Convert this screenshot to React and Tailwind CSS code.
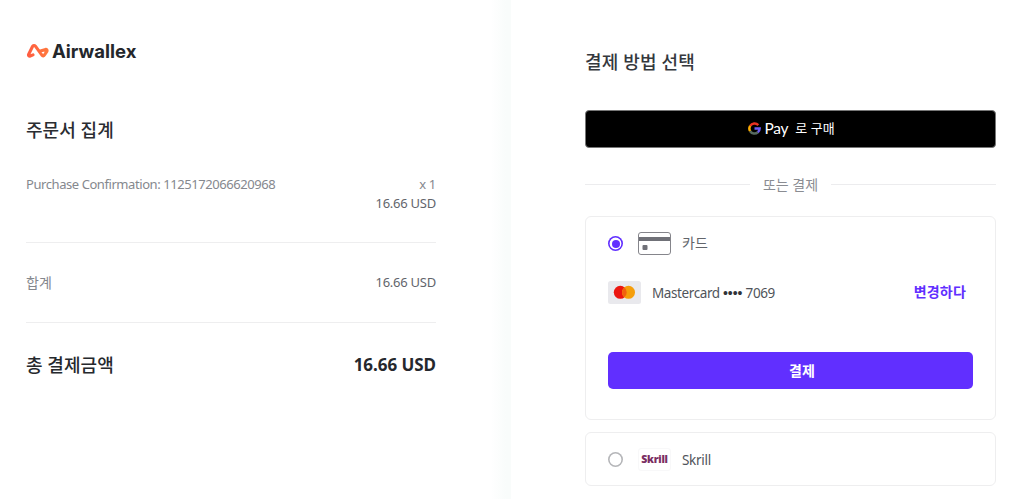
import React, { useState } from 'react';

const order = {
  item: 'Purchase Confirmation: 1125172066620968',
  quantity: 1,
  amount: '16.66 USD',
};

const AirwallexLogo = () => (
  <div className="flex h-5 items-center">
    <svg className="h-4 w-[23px] shrink-0" viewBox="0 0 23 16" fill="none">
      <defs>
        <linearGradient id="airwallex" x1="0" y1="0" x2="23" y2="0" gradientUnits="userSpaceOnUse">
          <stop stopColor="#ff5a41" />
          <stop offset="1" stopColor="#ff7a3d" />
        </linearGradient>
      </defs>
      <path
        d="M7 11.9 4.2 13C3.1 13.4 2.2 12.6 2.6 11.5L6.5 3.5C7.1 2.3 8.6 2.2 9.4 3.2L15.9 12.2C16.6 13.2 18 13 18.5 11.9L20.9 8.3C21.4 7.2 20.7 6.3 19.6 6.4L13.6 8.2"
        stroke="url(#airwallex)"
        strokeWidth="3.1"
        strokeLinecap="round"
        strokeLinejoin="round"
      />
    </svg>
    <span className="ml-[3px] font-['Inter',sans-serif] text-[18.5px] leading-5 font-bold tracking-[0px] text-[#24272b]">
      Airwallex
    </span>
  </div>
);

const GoogleIcon = () => (
  <svg className="h-[13px] w-[13px]" viewBox="0 0 24 24" fill="none" strokeWidth="4.6">
    <path d="M4 7A9.5 9.5 0 0 1 19 5.6" stroke="#ea3323" />
    <path d="M4 7A9.5 9.5 0 0 0 4 17" stroke="#f9ab00" />
    <path d="M4 17A9.5 9.5 0 0 0 18.2 19" stroke="#56695f" />
    <path d="M12 12H21.5A9.5 9.5 0 0 1 18.2 19" stroke="#6d5cf5" />
  </svg>
);

const CardIcon = () => (
  <svg className="h-[23px] w-[33px]" viewBox="0 0 33 23" fill="none">
    <rect x="0.5" y="0.5" width="32" height="22" rx="2.5" fill="#fff" stroke="#85858b" />
    <path d="M1 5h31v4H1z" fill="#707178" />
    <rect x="4.5" y="13" width="5" height="5" rx="1" fill="#707178" />
  </svg>
);

const MastercardIcon = () => (
  <svg className="h-[23px] w-[33px]" viewBox="0 0 33 23">
    <rect width="33" height="23" rx="2.5" fill="#e9e9ed" />
    <circle cx="12.3" cy="11.3" r="6.5" fill="#eb1610" />
    <circle cx="20.5" cy="11.3" r="6.5" fill="#f59e0b" />
    <path d="M16.4 6.3a6.5 6.5 0 0 1 0 10 6.5 6.5 0 0 1 0-10Z" fill="#f2610f" />
  </svg>
);

const Radio = ({ checked, onChange, label }) => (
  <button
    role="radio"
    aria-checked={checked}
    aria-label={label}
    onClick={onChange}
    className={`flex h-[15px] w-[15px] items-center justify-center rounded-full bg-white ring-inset ${
      checked ? 'ring-[1.6px] ring-[#612fff]' : 'ring-[1.6px] ring-[#b5b6b9]'
    }`}
  >
    {checked && <span className="h-[8px] w-[8px] rounded-full bg-[#612fff]" />}
  </button>
);

const OrderSummary = () => (
  <section className="flex h-full w-[511px] flex-col bg-linear-to-r from-white from-96% to-[#f9fcfb] to-99% pt-[41px] pr-[75px] pl-[26px]">
    <AirwallexLogo />
    <h2 className="mt-[57px] text-[18px] leading-6 font-medium tracking-[0.05px] text-[#2a2d32]">주문서 집계</h2>

    <div className="mt-[33px] flex h-[68px] justify-between border-b border-[#eeeeef] text-[13px] leading-[19px] text-[#85888e]">
      <span className="tracking-[-0.43px]">{order.item}</span>
      <div className="flex flex-col items-end">
        <span className="tracking-[-0.3px]">x {order.quantity}</span>
        <span className="tracking-[-0.25px] text-[#62656b]">{order.amount}</span>
      </div>
    </div>

    <div className="flex h-20 items-center justify-between border-b border-[#eeeeef] text-[13px] text-[#85888e]">
      <span className="text-[14px]">합계</span>
      <span className="pt-px tracking-[-0.25px] text-[#62656b]">{order.amount}</span>
    </div>

    <div className="flex h-[84px] items-center justify-between text-[#25282d]">
      <span className="text-[18px] font-medium tracking-[0.05px]">총 결제금액</span>
      <span className="text-[17px] font-bold tracking-[-0.05px]">{order.amount}</span>
    </div>
  </section>
);

const PaymentMethods = () => {
  const [method, setMethod] = useState('card');

  return (
    <section className="flex h-full w-[485px] flex-col pt-[50px] pl-[74px]">
      <h2 className="text-[18px] leading-6 font-medium tracking-[0.15px] text-[#35383d]">결제 방법 선택</h2>

      <button className="mt-9 flex h-[38px] shrink-0 items-center justify-center rounded-[4px] border border-[#777] bg-black pb-[2px] pl-[2px] text-white">
        <GoogleIcon />
        <span className="ml-[3px] font-['Lato',sans-serif] text-[15.5px] leading-5 tracking-[-0.2px]">Pay</span>
        <span className="ml-[7px] text-[13px] leading-5">로 구매</span>
      </button>

      <div className="mt-[26px] flex h-5 items-center gap-[13px] text-[14px] text-[#8a8c92]">
        <span className="h-px flex-1 bg-[#ececee]" />
        <span>또는 결제</span>
        <span className="h-px flex-1 bg-[#ececee]" />
      </div>

      <div role="radiogroup" className="mt-[22px] flex flex-col gap-3">
        {/* Card */}
        <div className="flex h-[204px] flex-col rounded-md border border-[#eeeeef] px-[22px] pt-[15px]">
          <div className="flex items-center">
            <Radio checked={method === 'card'} onChange={() => setMethod('card')} label="카드" />
            <span className="ml-[15px]"><CardIcon /></span>
            <span className="ml-[11px] pb-px text-[14px] leading-5 text-[#62656b]">카드</span>
          </div>
          <div className="mt-[26px] flex items-center">
            <MastercardIcon />
            <span className="ml-[11px] text-[13.5px] leading-5 tracking-[-0.4px] text-[#50545a]">
              Mastercard{' '}
              <span className="font-['Liberation_Sans',sans-serif] text-[14px] tracking-normal text-[#303338]">••••</span>
              {' '}7069
            </span>
            <button className="mr-[7px] ml-auto pb-[2px] text-[14px] leading-5 font-bold tracking-[0.2px] text-[#612fff]">변경하다</button>
          </div>
          <button className="mt-12 h-[37px] rounded-[5px] bg-[#612fff] pb-px pl-[23px] text-[14px] font-bold text-white">결제</button>
        </div>

        {/* Skrill */}
        <div className="flex h-[54px] items-center rounded-md border border-[#eeeeef] px-[22px]">
          <Radio checked={method === 'skrill'} onChange={() => setMethod('skrill')} label="Skrill" />
          <span className="ml-[15px] flex h-[23px] w-[33px] items-center justify-center rounded-[3px] border border-[#f8f8f9] font-['Open_Sans',sans-serif] text-[10.5px] leading-none font-extrabold tracking-[-0.3px] text-[#7b2e63]">
            Skrill
          </span>
          <span className="ml-[11px] pt-px text-[13.5px] leading-5 tracking-[-0.3px] text-[#50545a]">Skrill</span>
        </div>
      </div>
    </section>
  );
};

export default function App() {
  return (
    <main className="flex h-[499px] w-[1024px] overflow-hidden bg-white font-['Noto_Sans','Noto_Sans_CJK_KR',sans-serif]">
      <OrderSummary />
      <PaymentMethods />
    </main>
  );
}
